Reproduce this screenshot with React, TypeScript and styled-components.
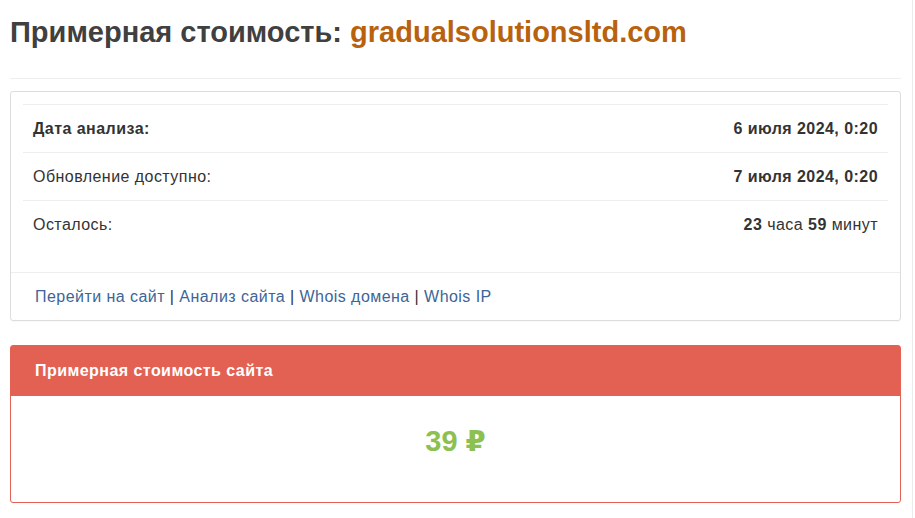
import React from "react";
import styled, { createGlobalStyle } from "styled-components";

const GlobalStyle = createGlobalStyle`
  html, body {
    margin: 0;
    padding: 0;
    background: #fff;
  }
  body {
    font-family: "Liberation Sans", Arial, "DejaVu Sans", sans-serif;
    color: #333;
  }
`;

type Row = {
  label: string;
  strongLabel?: boolean;
  value: React.ReactNode;
};

const rows: Row[] = [
  { label: "Дата анализа:", strongLabel: true, value: <b>6 июля 2024, 0:20</b> },
  { label: "Обновление доступно:", value: <b>7 июля 2024, 0:20</b> },
  {
    label: "Осталось:",
    value: (
      <>
        <b>23</b> часа <b>59</b> минут
      </>
    ),
  },
];

const links = ["Перейти на сайт", "Анализ сайта", "Whois домена", "Whois IP"];

const App = () => {
  return (
    <>
      <GlobalStyle />
      <Page>
        <Title>
          Примерная стоимость: <Domain>gradualsolutionsltd.com</Domain>
        </Title>
        <Divider />
        <InfoPanel>
          <InfoBody>
            <Table>
              <tbody>
                {rows.map((row) => (
                  <tr key={row.label}>
                    <LabelCell $strong={row.strongLabel}>{row.label}</LabelCell>
                    <ValueCell>{row.value}</ValueCell>
                  </tr>
                ))}
              </tbody>
            </Table>
          </InfoBody>
          <InfoFooter>
            {links.map((link, i) => (
              <React.Fragment key={link}>
                {i > 0 && <Sep> | </Sep>}
                <Link href="#">{link}</Link>
              </React.Fragment>
            ))}
          </InfoFooter>
        </InfoPanel>
        <PricePanel>
          <PriceHeading>Примерная стоимость сайта</PriceHeading>
          <PriceBody>
            <Price>39 ₽</Price>
          </PriceBody>
        </PricePanel>
      </Page>
    </>
  );
};

export default App;

const Page = styled.div`
  width: 891px;
  min-height: 518px;
  padding: 0 11px 0 10px;
  border-right: 1px solid #ebebeb;
  box-sizing: content-box;
  overflow: hidden;
  font-size: 16px;
  letter-spacing: 0.45px;
`;

const Title = styled.h1`
  margin: 14px 0 0;
  font-size: 29px;
  line-height: 36px;
  font-weight: bold;
  letter-spacing: 0;
  color: #404040;
`;

const Domain = styled.span`
  color: #b8620e;
`;

const Divider = styled.hr`
  margin: 28px 0 12px;
  border: 0;
  border-top: 1px solid #eeeeee;
`;

const InfoPanel = styled.div`
  border: 1px solid #dddddd;
  border-radius: 3px;
  box-shadow: 0 1px 1px rgba(0, 0, 0, 0.03);
`;

const InfoBody = styled.div`
  padding: 12px;
`;

const Table = styled.table`
  width: 100%;
  border-collapse: collapse;
  font-size: 16px;
  margin-bottom: 12px;

  tr {
    border-top: 1px solid #eeeeee;
  }
`;

const LabelCell = styled.td<{ $strong?: boolean }>`
  padding: 14px 10px;
  line-height: 19px;
  font-weight: ${(p) => (p.$strong ? "bold" : "normal")};
  text-align: left;
`;

const ValueCell = styled.td`
  padding: 14px 10px;
  line-height: 19px;
  text-align: right;
`;

const InfoFooter = styled.div`
  border-top: 1px solid #eeeeee;
  padding: 14px 24px;
  line-height: 19px;
`;

const Link = styled.a`
  color: #3d6597;
  text-decoration: none;
`;

const Sep = styled.span`
  color: #333;
`;

const PricePanel = styled.div`
  margin-top: 24px;
  border: 1px solid #e36152;
  border-radius: 3px;
`;

const PriceHeading = styled.div`
  background: #e36152;
  color: #fff;
  font-weight: bold;
  line-height: 19px;
  padding: 15px 24px 16px;
`;

const PriceBody = styled.div`
  height: 77px;
  padding-top: 29px;
  text-align: center;
`;

const Price = styled.div`
  color: #8cc152;
  font-size: 29px;
  font-weight: bold;
  line-height: 32px;
  letter-spacing: 0;
`;
